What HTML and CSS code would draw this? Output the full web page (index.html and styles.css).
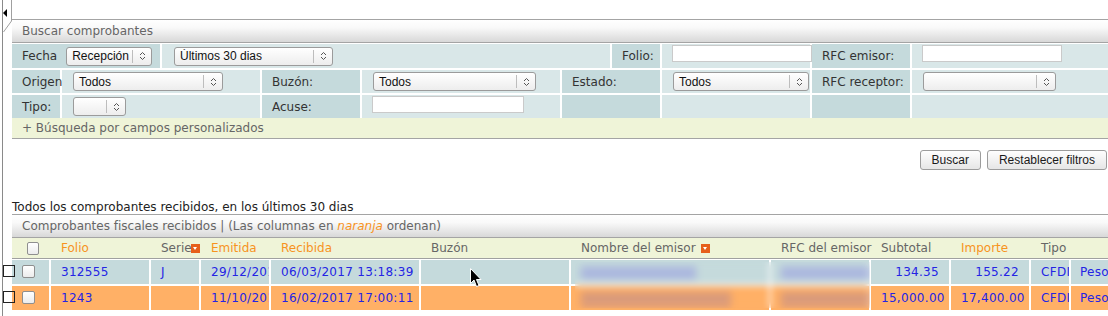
FILE: index.html
```html
<!DOCTYPE html>
<html lang="es">
<head>
  <meta charset="UTF-8" />
  <meta name="viewport" content="width=device-width, initial-scale=1.0" />
  <title>Comprobantes recibidos</title>
  <link rel="stylesheet" href="styles.css">
</head>
<body>
  <div class="page">
    <aside class="dock">
      <svg width="12" height="316" viewBox="0 0 12 316">
        <path d="M2.5 0 V316" stroke="#8a8a8a" />
        <path d="M11.5 0 V21 L3.5 32" stroke="#a0a0a0" fill="none" />
        <polygon points="7,9 3,13 7,17" fill="#000" />
      </svg>
    </aside>

    <main class="content">
      <!-- Filtros de busqueda -->
      <section class="panel">
        <h2 class="panel-title">Buscar comprobantes</h2>
        <div class="filters">
          <div class="frow frow-top">
            <div class="cell cell-label">
              <span class="lbl">Fecha</span>
              <div class="select sel-fecha"><span class="select-text">Recepción</span><span class="select-btn"><svg width="7" height="10" viewBox="0 0 7 10"><path d="M1 4 L3.5 1.5 L6 4 M1 6 L3.5 8.5 L6 6" stroke="#555" fill="none" /></svg></span></div>
            </div>
            <div class="cell cell-wide">
              <div class="select sel-rango"><span class="select-text">Últimos 30 dias</span><span class="select-btn"><svg width="7" height="10" viewBox="0 0 7 10"><path d="M1 4 L3.5 1.5 L6 4 M1 6 L3.5 8.5 L6 6" stroke="#555" fill="none" /></svg></span></div>
            </div>
            <div class="cell cell-label">Folio:</div>
            <div class="cell"><input class="field fld-folio" type="text"></div>
            <div class="cell cell-label">RFC emisor:</div>
            <div class="cell"><input class="field fld-rfc" type="text"></div>
          </div>

          <div class="frow frow-main">
            <div class="cell cell-label">Origen</div>
            <div class="cell">
              <div class="select sel-origen"><span class="select-text">Todos</span><span class="select-btn"><svg width="7" height="10" viewBox="0 0 7 10"><path d="M1 4 L3.5 1.5 L6 4 M1 6 L3.5 8.5 L6 6" stroke="#555" fill="none" /></svg></span></div>
            </div>
            <div class="cell cell-label">Buzón:</div>
            <div class="cell">
              <div class="select sel-buzon"><span class="select-text">Todos</span><span class="select-btn"><svg width="7" height="10" viewBox="0 0 7 10"><path d="M1 4 L3.5 1.5 L6 4 M1 6 L3.5 8.5 L6 6" stroke="#555" fill="none" /></svg></span></div>
            </div>
            <div class="cell cell-label">Estado:</div>
            <div class="cell">
              <div class="select sel-estado"><span class="select-text">Todos</span><span class="select-btn"><svg width="7" height="10" viewBox="0 0 7 10"><path d="M1 4 L3.5 1.5 L6 4 M1 6 L3.5 8.5 L6 6" stroke="#555" fill="none" /></svg></span></div>
            </div>
            <div class="cell cell-label">RFC receptor:</div>
            <div class="cell">
              <div class="select sel-receptor"><span class="select-text"></span><span class="select-btn"><svg width="7" height="10" viewBox="0 0 7 10"><path d="M1 4 L3.5 1.5 L6 4 M1 6 L3.5 8.5 L6 6" stroke="#555" fill="none" /></svg></span></div>
            </div>
          </div>

          <div class="frow frow-main">
            <div class="cell cell-label">Tipo:</div>
            <div class="cell">
              <div class="select sel-tipo"><span class="select-text"></span><span class="select-btn"><svg width="7" height="10" viewBox="0 0 7 10"><path d="M1 4 L3.5 1.5 L6 4 M1 6 L3.5 8.5 L6 6" stroke="#555" fill="none" /></svg></span></div>
            </div>
            <div class="cell cell-label">Acuse:</div>
            <div class="cell"><input class="field fld-acuse" type="text"></div>
            <div class="cell cell-label"></div>
            <div class="cell"></div>
            <div class="cell cell-label"></div>
            <div class="cell"></div>
          </div>
        </div>
        <div class="custom">+ Búsqueda por campos personalizados</div>
      </section>

      <div class="actions">
        <button class="btn" type="button">Buscar</button>
        <button class="btn" type="button">Restablecer filtros</button>
      </div>

      <p class="caption">Todos los comprobantes recibidos, en los últimos 30 dias</p>

      <!-- Resultados -->
      <section class="panel">
        <h2 class="panel-title">Comprobantes fiscales recibidos | (Las columnas en <em class="hint">naranja</em> ordenan)</h2>
        <div class="thead">
          <div class="th th-check"><span class="check"></span></div>
          <div class="th sortable">Folio</div>
          <div class="th">Serie<span class="sort-icon sort-tight"></span></div>
          <div class="th sortable">Emitida</div>
          <div class="th sortable">Recibida</div>
          <div class="th">Buzón</div>
          <div class="th">Nombre del emisor<span class="sort-icon"></span></div>
          <div class="th">RFC del emisor</div>
          <div class="th">Subtotal</div>
          <div class="th sortable">Importe</div>
          <div class="th">Tipo</div>
          <div class="th"></div>
        </div>

        <div class="rows">
          <div class="row row-a">
            <span class="pick"></span>
            <div class="td td-check"><span class="check"></span></div>
            <div class="td">312555</div>
            <div class="td">J</div>
            <div class="td">29/12/2016</div>
            <div class="td">06/03/2017 13:18:39</div>
            <div class="td"></div>
            <div class="td"><span class="redact redact-a name-a"></span></div>
            <div class="td"><span class="redact redact-a rfc"></span></div>
            <div class="td num">134.35</div>
            <div class="td num">155.22</div>
            <div class="td">CFDI</div>
            <div class="td td-last">Pesos</div>
          </div>
          <div class="row row-b">
            <span class="pick"></span>
            <div class="td td-check"><span class="check"></span></div>
            <div class="td">1243</div>
            <div class="td"></div>
            <div class="td">11/10/2016</div>
            <div class="td">16/02/2017 17:00:11</div>
            <div class="td"></div>
            <div class="td"><span class="redact redact-b name-b"></span></div>
            <div class="td"><span class="redact redact-b rfc"></span></div>
            <div class="td num">15,000.00</div>
            <div class="td num">17,400.00</div>
            <div class="td">CFDI</div>
            <div class="td td-last">Pesos</div>
          </div>
          <div class="blur"></div>
          <svg class="cursor" width="12" height="20" viewBox="0 0 12 20">
            <path d="M0.5 0.5 V15.5 L4 12 L6.5 18.5 L9 17.5 L6.5 11.5 L11 11.5 Z" fill="#000" stroke="#fff" stroke-width="1" />
          </svg>
        </div>
      </section>
    </main>
  </div>
</body>
</html>
```

FILE: styles.css
```css
/* Base */
* {
  box-sizing: border-box;
}

body {
  margin: 0;
  font-family: "DejaVu Sans", Verdana, sans-serif;
  font-size: 12px;
  color: #333;
  background-color: #fff;
  overflow: hidden;
}

.page {
  display: flex;
  width: 1108px;
  height: 316px;
}

.dock {
  flex: 0 0 12px;
}

.dock svg {
  display: block;
}

.content {
  flex: 1;
  min-width: 0;
  padding-top: 19px;
}

/* Paneles */
.panel-title {
  margin: 0;
  height: 24px;
  padding-left: 10px;
  border-top: 1px solid #a4a4a4;
  border-bottom: 1px solid #a4a4a4;
  background: linear-gradient(#fff, #f9f9f9 35%, #d8d8d8);
  font-size: 12px;
  font-weight: normal;
  line-height: 22px;
  color: #666;
  white-space: nowrap;
}

.hint {
  color: #f7931e;
}

/* Filtros */
.filters {
  display: flex;
  flex-direction: column;
  gap: 2px;
  padding-top: 1px;
}

.frow {
  display: grid;
  gap: 2px;
  height: 23px;
}

.frow-top {
  height: 24px;
  grid-template-columns: 148px 448px 48px 148px 98px 196px;
}

.frow-main {
  grid-template-columns: 48px 198px 98px 198px 98px 148px 98px 196px;
}

.cell {
  display: flex;
  align-items: center;
  padding-left: 10px;
  background-color: #d9e7e8;
  white-space: nowrap;
}

.cell-label {
  background-color: #c5dadc;
}

.cell-wide {
  padding-left: 11px;
}

.lbl {
  margin-right: 8px;
}

.select {
  display: flex;
  align-items: center;
  height: 19px;
  margin-left: 1px;
  border: 1px solid #9b9b9b;
  border-radius: 3px;
  background: linear-gradient(#fff, #ededed);
  font-family: "Liberation Sans", Arial, sans-serif;
  font-size: 12px;
  color: #111;
}

.select-text {
  flex: 1;
  padding-left: 5px;
  overflow: hidden;
}

.select-btn {
  display: flex;
  align-items: center;
  justify-content: center;
  width: 19px;
  height: 13px;
  border-left: 1px solid #bdbdbd;
}

.select-btn svg {
  display: block;
}

.sel-fecha { width: 86px; }
.sel-rango { width: 159px; }
.sel-origen { width: 150px; }
.sel-buzon { width: 163px; }
.sel-estado { width: 136px; }
.sel-receptor { width: 133px; }
.sel-tipo { width: 53px; }

.field {
  align-self: flex-start;
  height: 17px;
  margin: 1px 0 0;
  padding: 0 2px;
  border: 1px solid #cacaca;
  background-color: #fff;
  font-size: 12px;
}

.fld-folio { width: 140px; }
.fld-rfc { width: 140px; }
.fld-acuse { width: 152px; }

.custom {
  height: 21px;
  padding-left: 10px;
  border-bottom: 1px solid #a4a4a4;
  background-color: #eff4d8;
  line-height: 20px;
  color: #666;
}

/* Botones */
.actions {
  display: flex;
  justify-content: flex-end;
  gap: 6px;
  margin-top: 11px;
  padding-right: 1px;
}

.btn {
  height: 20px;
  padding: 0 11px;
  border: 1px solid #9c9c9c;
  border-radius: 3px;
  background: linear-gradient(#fefefe, #e6e6e6);
  font-family: "Liberation Sans", Arial, sans-serif;
  font-size: 12px;
  color: #1a1a1a;
}

.caption {
  margin: 30px 0 0;
  line-height: 14px;
  color: #222;
  white-space: nowrap;
}

/* Tabla de comprobantes */
.thead,
.row {
  display: grid;
  grid-template-columns: 37px 98px 48px 68px 148px 148px 198px 98px 78px 78px 38px 120px;
  column-gap: 2px;
}

.thead {
  height: 21px;
  border-bottom: 1px solid #a0a0a0;
  background-color: #eff4d8;
}

.th {
  display: flex;
  align-items: center;
  padding: 0 10px;
  color: #666;
  white-space: nowrap;
}

.th.sortable {
  color: #f7931e;
}

.th-check,
.td-check {
  padding-left: 15px;
}

.check {
  display: block;
  width: 13px;
  height: 13px;
  border: 1px solid #8f8f8f;
  border-radius: 2px;
  background: linear-gradient(#fff, #ececec);
}

.td-check .check {
  margin-top: 5px;
}

.sort-icon {
  position: relative;
  flex: 0 0 9px;
  width: 9px;
  height: 9px;
  margin-left: 5px;
  background-color: #e65f1b;
}

.sort-icon::after {
  content: "";
  position: absolute;
  left: 2px;
  top: 3px;
  border-left: 2.5px solid transparent;
  border-right: 2.5px solid transparent;
  border-top: 3px solid #fff;
}

.sort-tight {
  margin-left: -1px;
}

.rows {
  position: relative;
  display: flex;
  flex-direction: column;
  gap: 2px;
  margin-top: 1px;
}

.row {
  position: relative;
  height: 24px;
}

.td {
  padding: 0 10px;
  overflow: hidden;
  white-space: nowrap;
  line-height: 24px;
  letter-spacing: 0.3px;
  color: #2424e4;
}

.td.num {
  text-align: right;
}

.td-last {
  padding-left: 9px;
}

.row-a .td {
  background-color: #c5dadc;
}

.row-b .td {
  background-color: #ffb066;
}

.pick {
  position: absolute;
  left: -9px;
  top: 5px;
  width: 12px;
  height: 12px;
  border: 1px solid #222;
}

/* Datos ocultos del emisor */
.redact {
  display: inline-block;
  height: 12px;
  vertical-align: middle;
  filter: blur(2px);
}

.redact-a {
  background-color: #a9b5de;
}

.redact-b {
  height: 14px;
  background-color: #d99a7b;
}

.name-a { width: 115px; }
.name-b { width: 150px; }
.rfc { width: 88px; }

.blur {
  position: absolute;
  left: 563px;
  top: 2px;
  width: 295px;
  height: 46px;
  backdrop-filter: blur(3px);
}

.cursor {
  position: absolute;
  left: 458px;
  top: 8px;
}
```
